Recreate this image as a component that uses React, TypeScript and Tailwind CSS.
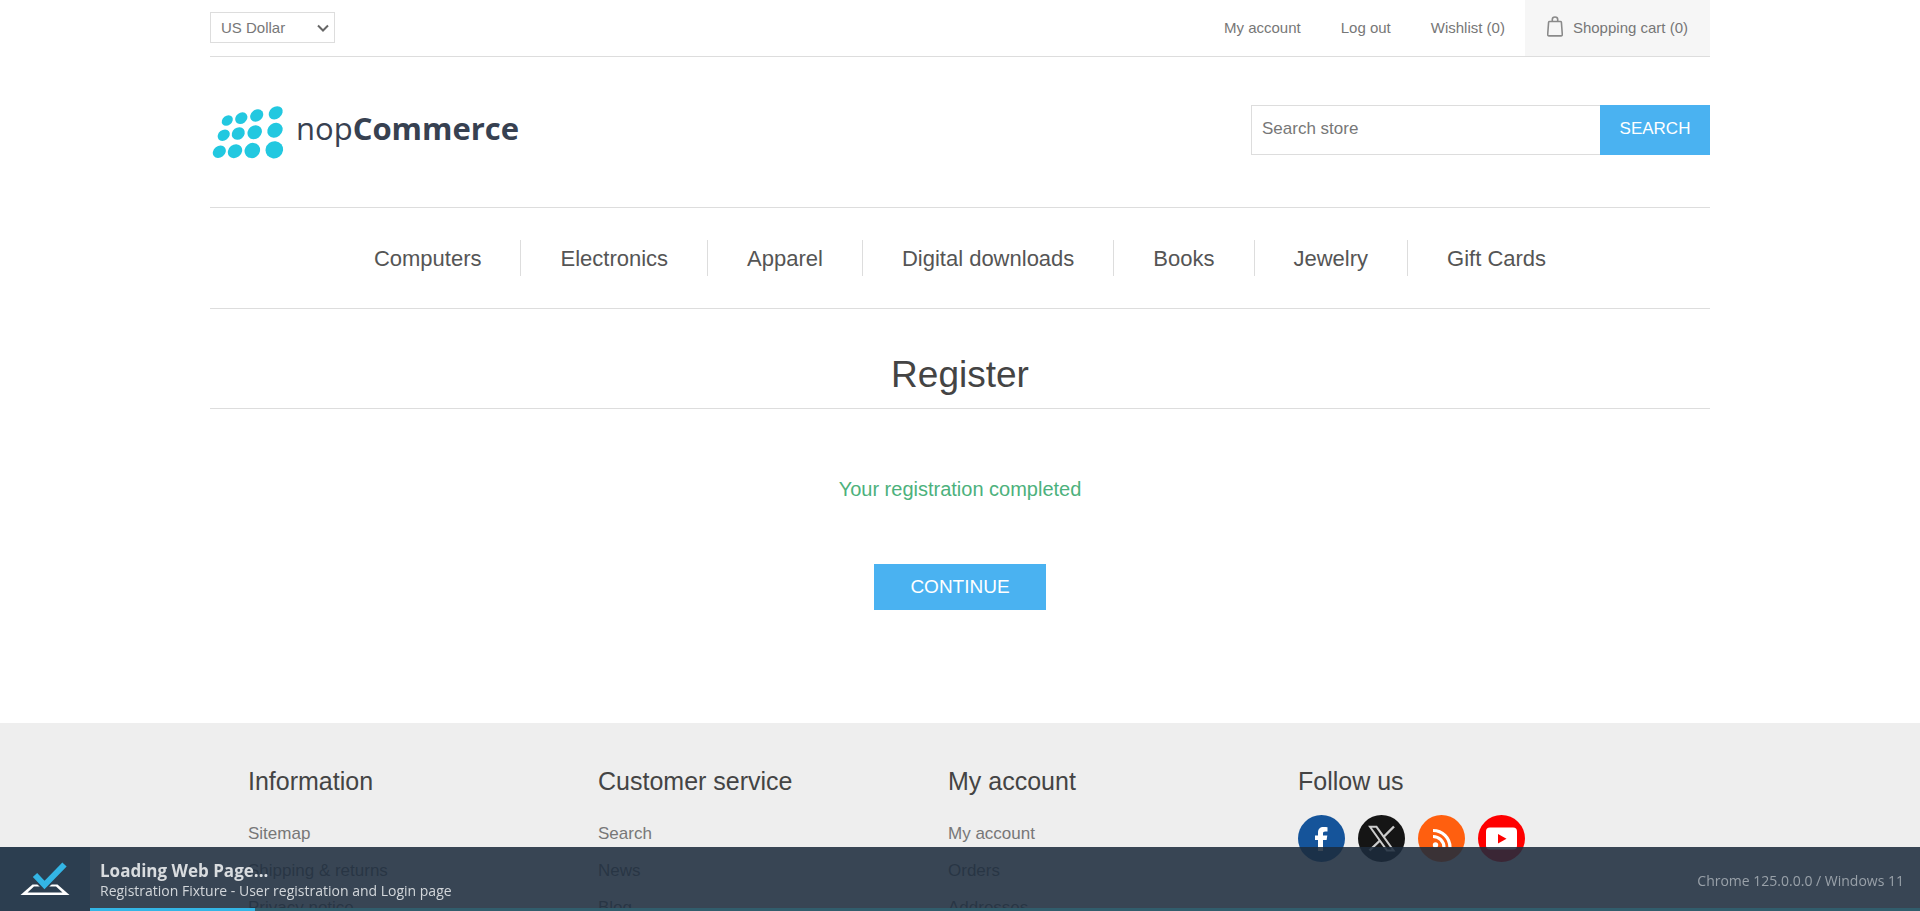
import React from "react";

const categories = ["Computers", "Electronics", "Apparel", "Digital downloads", "Books", "Jewelry", "Gift Cards"];

const columns = [
  { title: "Information", links: ["Sitemap", "Shipping & returns", "Privacy notice"] },
  { title: "Customer service", links: ["Search", "News", "Blog"] },
  { title: "My account", links: ["My account", "Orders", "Addresses"] },
];

const dots = [
  [17.3, 14, 6, 4.7], [31.3, 11.7, 6.6, 5.4], [46.7, 9, 7, 5.7], [65.7, 6.3, 7.6, 6],
  [13.7, 28.7, 6.6, 5.2], [28.3, 27, 6.9, 5.9], [44.7, 25.7, 7.6, 6.6], [65, 23.7, 8.1, 7],
  [9.3, 45.3, 7, 5.7], [25, 44.7, 7.6, 6.5], [42.3, 44, 8, 7.4], [64.3, 43.3, 8.9, 8.5],
];

function Logo() {
  return (
    <a href="#" aria-label="nopCommerce" className="flex items-center gap-1.5 font-['Open_Sans',sans-serif] text-[31px] leading-10 text-[#374151]">
      <svg viewBox="0 -3 80 57" className="h-[57px] w-20" aria-hidden="true">
        {dots.map(([x, y, rx, ry]) => (
          <ellipse key={`${x}-${y}`} cx={x} cy={y + 1.5} rx={rx} ry={ry} fill="#22c8e0" transform={`rotate(-38 ${x} ${y + 1.5})`} />
        ))}
      </svg>
      <span className="pb-1">nop<b className="font-bold">Commerce</b></span>
    </a>
  );
}

function BagIcon() {
  return (
    <svg viewBox="0 0 16 21" className="mb-1 h-[21px] w-4" fill="none" stroke="#8a8a8a" strokeWidth="1.6" aria-hidden="true">
      <path d="M2.5 5.5h11c.5 0 .8.3.9.8l.9 12c.1 1-.4 1.6-1.3 1.6H2c-.9 0-1.4-.6-1.3-1.6l.9-12c.1-.5.4-.8.9-.8Z" />
      <path d="M5.3 5.5V3.5C5.3 1.800 6.400 1 8 1s2.700.8 2.700 2.500v2" />
    </svg>
  );
}

function Social() {
  return (
    <div className="flex gap-[13px]">
      <a href="#" aria-label="Facebook">
        <svg viewBox="0 0 47 47" className="size-[47px]"><circle cx="23.5" cy="23.5" r="23.5" fill="#15549a" /><path fill="#fff" d="M20 36V25h-3v-4.500h3v-2.600c0-4 2-5.900 5.600-5.900 1.500 0 2.900.1 3.900.3v4.200h-2.300c-1.700 0-2.200.7-2.200 2v2h4.300l-.7 4.500H25v11Z" /></svg>
      </a>
      <a href="#" aria-label="X">
        <svg viewBox="0 0 47 47" className="size-[47px]"><circle cx="23.5" cy="23.5" r="23.5" fill="#151515" /><path d="M12 11.800h6.500L35.500 35.500H29Z" fill="none" stroke="#ccc" strokeWidth="2" /><path d="M36 11.500 25.500 22M22 25.500 11.500 35.500" stroke="#ccc" strokeWidth="2.4" /></svg>
      </a>
      <a href="#" aria-label="RSS">
        <svg viewBox="0 0 47 47" className="size-[47px]"><circle cx="23.5" cy="23.5" r="23.5" fill="#ff5f0f" /><circle cx="17.5" cy="30" r="2.7" fill="#fff" /><path d="M15 21.500a11 11 0 0 1 11 11M15 15.500a17 17 0 0 1 17 17" fill="none" stroke="#fff" strokeWidth="3.2" /></svg>
      </a>
      <a href="#" aria-label="YouTube">
        <svg viewBox="0 0 47 47" className="size-[47px]"><circle cx="23.5" cy="23.5" r="23.5" fill="#fe0000" /><rect x="8" y="12.5" width="31" height="22" rx="4" fill="#fff" /><path d="M20 19v9.500l8.500-4.750Z" fill="#fe0000" /></svg>
      </a>
    </div>
  );
}

function StatusBar() {
  return (
    <div className="fixed inset-x-0 bottom-0 flex h-16 bg-[#1d2c3d]/87 font-['Open_Sans',sans-serif]">
      <div className="flex w-[90px] items-center justify-center bg-[#2c3e50]">
        <svg viewBox="0 0 50 34" className="h-[34px] w-[50px]" aria-hidden="true">
          <path d="M.5 33 12.500 22.500H37.500L49.500 33Z" fill="#fff" />
          <path d="M7.500 30.500 14 24.500H36L42.500 30.500Z" fill="#2c3e50" />
          <path d="M15 14 24.500 24 44.500 3" fill="none" stroke="#2c3e50" strokeWidth="8" />
          <path d="M15 13 24.500 23 44.500 2.500" fill="none" stroke="#33b5e5" strokeWidth="6" />
        </svg>
      </div>
      <div className="flex flex-1 flex-col">
        <div className="flex flex-1 items-center justify-between pt-1.5 pr-4 pl-2.5">
          <div>
            <p className="text-[17px] leading-[21px] font-bold text-[#d9dcdf]">Loading Web Page...</p>
            <p className="text-sm leading-5 text-[#d2d6da]">Registration Fixture - User registration and Login page</p>
          </div>
          <p className="text-sm text-[#99a1a9]">Chrome 125.0.0.0 / Windows 11</p>
        </div>
        <div className="h-[3px] bg-[#315d6c]"><div className="h-full w-[9%] bg-[#33b5e5]" /></div>
      </div>
    </div>
  );
}

export default function App() {
  return (
    <div className="bg-white font-['Liberation_Sans',Arial,sans-serif] text-[#777]">
      <div className="mx-auto max-w-[1500px]">
        <header>
          <div className="flex h-[57px] items-stretch justify-between border-b border-[#ddd] text-[15px]">
            <div className="relative flex items-center self-start pt-3">
              <select aria-label="Currency" className="h-[31px] w-[125px] appearance-none border border-[#ddd] bg-white pt-0.5 pl-2.5">
                <option>US Dollar</option>
              </select>
              <svg viewBox="0 0 12 8" className="pointer-events-none absolute right-1.5 h-2 w-3" fill="none" stroke="#666" strokeWidth="2" aria-hidden="true"><path d="m1 1.500 5 5 5-5" /></svg>
            </div>
            <nav aria-label="Account" className="flex items-center gap-10">
              <a href="#">My account</a>
              <a href="#">Log out</a>
              <div className="flex h-full items-center gap-5">
                <a href="#">Wishlist (0)</a>
                <a href="#" className="flex h-full items-center gap-2.5 bg-[#f6f6f6] px-[22px]"><BagIcon />Shopping cart (0)</a>
              </div>
            </nav>
          </div>
          <div className="flex h-[150px] items-center justify-between pb-1">
            <Logo />
            <form className="flex h-[50px] text-[17px]" onSubmit={(e) => e.preventDefault()}>
              <input type="text" aria-label="Search store" placeholder="Search store" className="w-[349px] border border-r-0 border-[#ddd] px-2.5 pb-0.5 placeholder:text-[#777]" />
              <button type="submit" className="w-[110px] bg-[#4ab2f1] pb-0.5 text-white">SEARCH</button>
            </form>
          </div>
        </header>
        <nav aria-label="Categories" className="flex h-[102px] items-center justify-center border-y border-[#ddd] text-[22px] text-[#555]">
          {categories.map((c) => (
            <a key={c} href="#" className="flex h-9 items-center border-r border-[#ddd] px-[39px] whitespace-nowrap last:border-r-0">{c}</a>
          ))}
        </nav>
        <main className="flex flex-col items-center pb-[113px]">
          <h1 className="w-full border-b border-[#ddd] pt-11 pb-[11px] text-center text-[37px] leading-[44px] text-[#444]">Register</h1>
          <p className="pt-[68px] text-xl leading-6 text-[#4cb17c]">Your registration completed</p>
          <button type="button" className="mt-[63px] h-[46px] w-[172px] bg-[#4ab2f1] text-[19px] text-white">CONTINUE</button>
        </main>
      </div>
      <footer className="bg-[#eee] pt-[43px] pb-12">
        <div className="mx-auto grid max-w-[1500px] grid-cols-4 pr-[62px] pl-[38px] text-[17px]">
          {columns.map((col) => (
            <section key={col.title}>
              <h2 className="mb-[19px] text-[25px] leading-[30px] text-[#444]">{col.title}</h2>
              <ul>
                {col.links.map((l) => (
                  <li key={l} className="h-[37px] leading-[37px]"><a href="#">{l}</a></li>
                ))}
              </ul>
            </section>
          ))}
          <section>
            <h2 className="mb-[19px] text-[25px] leading-[30px] text-[#444]">Follow us</h2>
            <Social />
          </section>
        </div>
      </footer>
      <StatusBar />
    </div>
  );
}
